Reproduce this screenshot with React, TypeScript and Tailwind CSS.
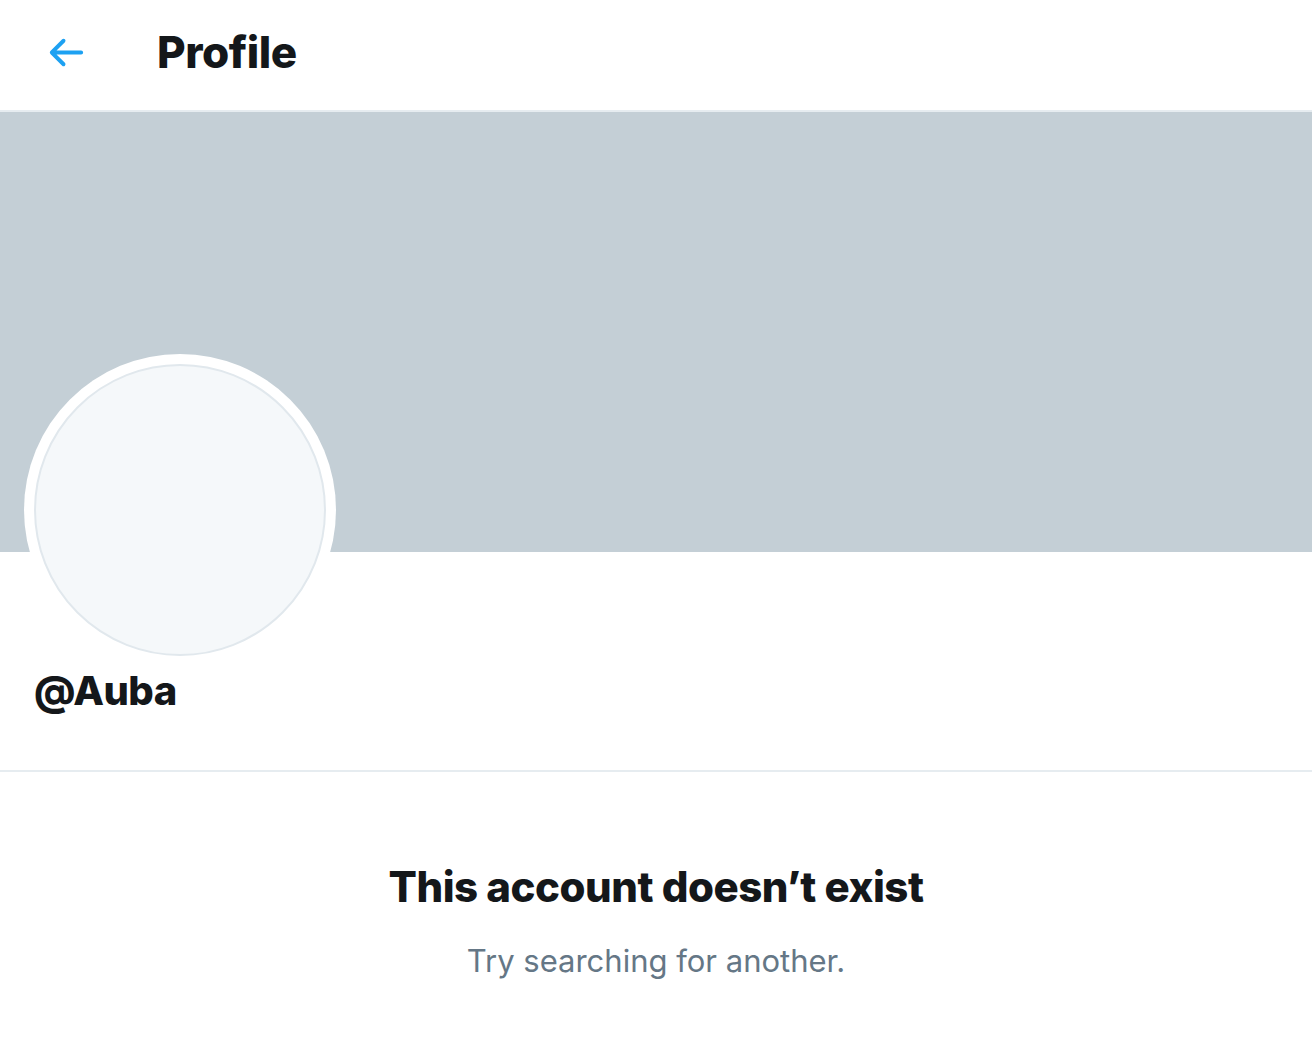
export default function App() {
  return (
    <div className="w-[1312px] min-h-[1062px] bg-white" style={{ fontFamily: 'Inter, "Noto Sans", sans-serif' }}>
      <header className="h-[112px] border-b-2 border-[#e6ecf0] flex items-center pb-[6px]">
        <div className="ml-[42px] w-[47px] h-[47px] flex items-center justify-center">
          <svg viewBox="0 0 24 24" width="47" height="47" fill="#1da1f2">
            <path d="M20 11H7.414l4.293-4.293c.39-.39.39-1.023 0-1.414s-1.023-.39-1.414 0l-6 6c-.39.39-.39 1.023 0 1.414l6 6c.195.195.45.293.707.293s.512-.098.707-.293c.39-.39.39-1.023 0-1.414L7.414 13H20c.553 0 1-.447 1-1s-.447-1-1-1z" />
          </svg>
        </div>
        <h1 className="ml-[68px] text-[44px] font-extrabold text-[#14171a] leading-none tracking-[-0.5px]">Profile</h1>
      </header>
      <div className="h-[440px] bg-[#c4cfd6]" />
      <section className="px-[24px] border-b-2 border-[#e6ecf0] pb-[55px]">
        <div className="w-[312px] h-[312px] -mt-[198px] rounded-full bg-white p-[10px]">
          <div className="w-full h-full rounded-full border-2 border-[#e1e8ed] bg-[#f5f8fa]" />
        </div>
        <div className="mt-[1px] ml-[10px] text-[40px] font-extrabold text-[#14171a] leading-[48px] tracking-[-0.5px]">@Auba</div>
      </section>
      <div className="flex flex-col items-center pt-[89px]">
        <div className="text-[42px] font-extrabold text-[#14171a] leading-[52px] tracking-[-0.5px]">This account doesn’t exist</div>
        <div className="mt-[28px] text-[31px] text-[#657786] leading-[40px]">Try searching for another.</div>
      </div>
    </div>
  );
}
